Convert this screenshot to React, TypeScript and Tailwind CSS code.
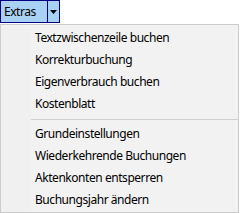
const groups = [
  ["Textzwischenzeile buchen", "Korrekturbuchung", "Eigenverbrauch buchen", "Kostenblatt"],
  ["Grundeinstellungen", "Wiederkehrende Buchungen", "Aktenkonten entsperren", "Buchungsjahr ändern"],
];

export default function App() {
  return (
    <div className="w-[240px] h-[213px] bg-white overflow-hidden text-[12px] tracking-[-0.45px] text-black" style={{ fontFamily: '"Noto Sans", Arial, sans-serif' }}>
      <div className="flex h-[23px] w-[60px] border border-[#000080] bg-[#a9d1f3]">
        <div className="flex w-[46px] items-center pl-[3px] leading-none">Extras</div>
        <div className="flex flex-1 items-center justify-center border-l border-[#000080]">
          <svg width="7" height="4" viewBox="0 0 7 4">
            <polygon points="0,0 7,0 3.5,4" fill="#000" />
          </svg>
        </div>
      </div>
      <div className="mt-[1px] w-[239px] h-[189px] border border-[#cccccc] bg-[#f2f2f2] flex pt-[2px]">
        <div className="w-[30px] bg-[#f0f0f0]" />
        <div className="flex-1">
          {groups.map((items, gi) => (
            <div key={gi}>
              {gi > 0 && (
                <div className="flex h-[8px] items-center">
                  <div className="h-px w-full bg-[#d0d0d0]" />
                </div>
              )}
              {items.map((label) => (
                <div key={label} className="flex h-[22px] items-center pl-[4px] whitespace-nowrap">
                  {label}
                </div>
              ))}
            </div>
          ))}
        </div>
      </div>
    </div>
  );
}
